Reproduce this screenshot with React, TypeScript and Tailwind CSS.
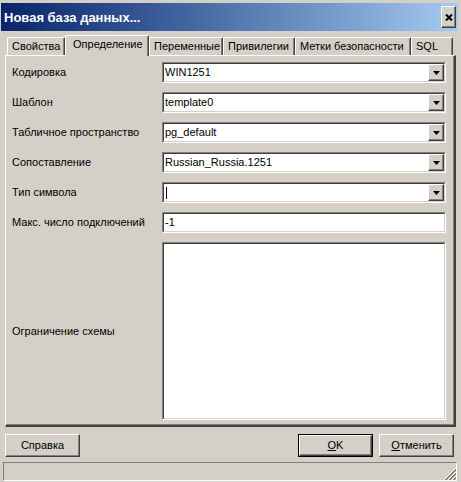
import type { ReactNode } from 'react';

const tabs = [
  { label: 'Свойства', w: 'w-[58px]' },
  { label: 'Определение', w: 'w-[84px]', active: true },
  { label: 'Переменные', w: 'w-[74px]' },
  { label: 'Привилегии', w: 'w-[72px]' },
  { label: 'Метки безопасности', w: 'w-[116px]' },
  { label: 'SQL', w: 'w-[42px]' },
];

const combos = [
  { label: 'Кодировка', value: 'WIN1251' },
  { label: 'Шаблон', value: 'template0' },
  { label: 'Табличное пространство', value: 'pg_default' },
  { label: 'Сопоставление', value: 'Russian_Russia.1251' },
];

function Sunken({ className, children }: { className?: string; children?: ReactNode }) {
  return (
    <div className={`border border-t-[#808080] border-l-[#808080] border-b-white border-r-white ${className ?? ''}`}>
      <div className="h-full border border-t-[#404040] border-l-[#404040] border-b-[#d4d0c8] border-r-[#d4d0c8] bg-white flex items-center">
        {children}
      </div>
    </div>
  );
}

function Raised({ className, children }: { className?: string; children?: ReactNode }) {
  return (
    <div
      className={`border border-t-white border-l-white border-b-[#404040] border-r-[#404040] shadow-[inset_-1px_-1px_0_#808080] bg-[#d4d0c8] flex items-center justify-center ${className ?? ''}`}
    >
      {children}
    </div>
  );
}

function DropButton() {
  return (
    <Raised className="w-[16px] h-[17px]">
      <svg width="7" height="4" viewBox="0 0 7 4">
        <polygon points="0,0 7,0 3.5,4" fill="#000" />
      </svg>
    </Raised>
  );
}

function Row({ label, children }: { label: string; children: ReactNode }) {
  return (
    <div className="flex items-center">
      <div className="w-[150px] leading-none">{label}</div>
      {children}
    </div>
  );
}

export default function App() {
  return (
    <div className="w-[461px] h-[482px] bg-[#d4d0c8] pt-[3px] text-[11px] text-black font-['Liberation_Sans',Arial,sans-serif] overflow-hidden">
      {/* title bar */}
      <div className="ml-[1px] w-[457px] h-[28px] bg-gradient-to-r from-[#0a246a] to-[#a6caf0] flex items-center justify-between pl-[3px] pr-[2px]">
        <span className="text-white font-bold text-[13px] leading-none">Новая база данных...</span>
        <Raised className="w-[15px] h-[22px]">
          <svg width="8" height="7" viewBox="0 0 8 7">
            <path d="M1 0.5 L7 6.5 M7 0.5 L1 6.5" stroke="#000" strokeWidth="2" />
          </svg>
        </Raised>
      </div>

      {/* tabs */}
      <div className="mt-[4px] h-[20px] flex items-end pl-[7px]">
        {tabs.map((t) =>
          t.active ? (
            <div
              key={t.label}
              className={`${t.w} h-[21px] -mb-[1px] relative z-10 bg-[#d4d0c8] border-t border-l border-r border-t-white border-l-white border-r-[#404040] shadow-[inset_-1px_0_0_#808080] rounded-t-[2px] flex items-center pl-[7px] pb-[3px] whitespace-nowrap`}
            >
              {t.label}
            </div>
          ) : (
            <div
              key={t.label}
              className={`${t.w} h-[18px] bg-[#d4d0c8] border-t border-l border-r border-t-white border-l-white border-r-[#404040] shadow-[inset_-1px_0_0_#808080] rounded-t-[2px] flex items-center pl-[4px] whitespace-nowrap`}
            >
              {t.label}
            </div>
          )
        )}
      </div>

      {/* panel */}
      <div className="ml-[5px] w-[451px] h-[372px] border-t border-l border-t-white border-l-white border-r-2 border-b-2 border-r-[#404040] border-b-[#404040] shadow-[inset_-1px_-1px_0_#808080] pt-[6px] pl-[6px] flex flex-col gap-[9px]">
        {combos.map((c) => (
          <Row key={c.label} label={c.label}>
            <Sunken className="w-[284px] h-[21px]">
              <span className="flex-1 pl-[1px] leading-none">{c.value}</span>
              <DropButton />
            </Sunken>
          </Row>
        ))}
        <Row label="Тип символа">
          <Sunken className="w-[284px] h-[21px]">
            <span className="flex-1 pl-[2px] flex items-center">
              <span className="block w-[1px] h-[12px] bg-black" />
            </span>
            <DropButton />
          </Sunken>
        </Row>
        <Row label="Макс. число подключений">
          <Sunken className="w-[284px] h-[21px]">
            <span className="pl-[1px] leading-none">-1</span>
          </Sunken>
        </Row>
        <Row label="Ограничение схемы">
          <Sunken className="w-[284px] h-[178px]" />
        </Row>
      </div>

      {/* buttons */}
      <div className="mt-[7px] h-[23px] flex pl-[5px] pr-[7px]">
        <Raised className="w-[75px] h-[23px]">Справка</Raised>
        <div className="flex-1" />
        <div className="w-[75px] h-[23px] border border-black">
          <Raised className="w-full h-full">
            <span>
              <span className="underline">O</span>K
            </span>
          </Raised>
        </div>
        <Raised className="ml-[6px] w-[75px] h-[23px]">
          <span>
            <span className="underline">О</span>тменить
          </span>
        </Raised>
      </div>

      {/* status bar */}
      <div className="mt-[5px] ml-[3px] w-[454px] h-[19px] border border-t-[#808080] border-l-[#808080] border-b-white border-r-white flex items-end justify-end">
        <svg width="12" height="12" viewBox="0 0 12 12">
          <path d="M12 1 L1 12 M12 5 L5 12 M12 9 L9 12" stroke="#808080" strokeWidth="1" />
          <path d="M12 2 L2 12 M12 6 L6 12 M12 10 L10 12" stroke="#808080" strokeWidth="1" />
          <path d="M12 0 L0 12 M12 4 L4 12 M12 8 L8 12" stroke="#ffffff" strokeWidth="1" />
        </svg>
      </div>
    </div>
  );
}
